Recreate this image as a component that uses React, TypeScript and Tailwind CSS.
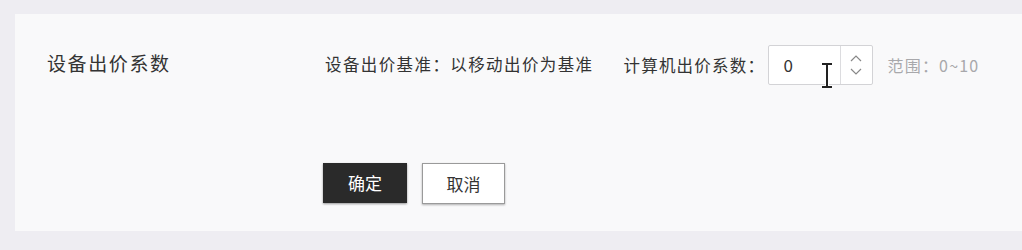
import React from "react";

const font = { fontFamily: '"Noto Sans CJK SC", "Noto Sans", sans-serif' };

export default function App() {
  return (
    <div className="w-[1022px] h-[250px] bg-[#eeedf2] pt-[14px] pl-[15px]" style={font}>
      <div className="relative h-[217px] bg-[#f9f9fa] pl-[32px] pt-[31px]">
        <div className="flex items-center h-[40px]">
          <div className="w-[278px] text-[19px] tracking-[1.6px] text-[#333] leading-none -mt-[6px]">设备出价系数</div>
          <div className="text-[16.5px] tracking-[1.4px] text-[#333] leading-none -mt-[2px]">设备出价基准：以移动出价为基准</div>
          <div className="ml-[30px] w-[144px] text-[16.5px] tracking-[1.2px] text-[#333] leading-none">计算机出价系数：</div>
          <div className="flex h-[40px] w-[105px] border border-[#d3d3d6] rounded-[2px] bg-white">
            <div className="flex-1 flex items-center pl-[15px] text-[17px] text-[#333]">0</div>
            <div className="w-[32px] border-l border-[#dcdcdf] flex flex-col items-center justify-center gap-[6px]">
              <svg width="12" height="7" viewBox="0 0 12 7" fill="none" stroke="#888" strokeWidth="1.2">
                <path d="M1 6 L6 1 L11 6" />
              </svg>
              <svg width="12" height="7" viewBox="0 0 12 7" fill="none" stroke="#888" strokeWidth="1.2">
                <path d="M1 1 L6 6 L11 1" />
              </svg>
            </div>
          </div>
          <div className="ml-[15px] text-[16px] tracking-[1.2px] text-[#a8a8ab] leading-none">范围：0~10</div>
        </div>
        <div className="flex gap-[15px] mt-[78px] ml-[276px]">
          <button className="w-[84px] h-[40px] bg-[#2a2a2a] text-white text-[17px] shadow-[0_1px_2px_rgba(0,0,0,0.4)]">确定</button>
          <button className="w-[83px] h-[41px] bg-white border border-[#9a9a9a] text-[#333] text-[17px] shadow-[0_1px_2px_rgba(0,0,0,0.3)]">取消</button>
        </div>
        <svg className="absolute left-[806px] top-[49px]" width="12" height="25" viewBox="0 0 12 25">
          <path d="M1 1 H11 M6 1 V24 M1 24 H11" stroke="#fff" strokeWidth="4" fill="none" />
          <path d="M1 1 H11 M6 1 V24 M1 24 H11" stroke="#222" strokeWidth="2" fill="none" />
        </svg>
      </div>
    </div>
  );
}
